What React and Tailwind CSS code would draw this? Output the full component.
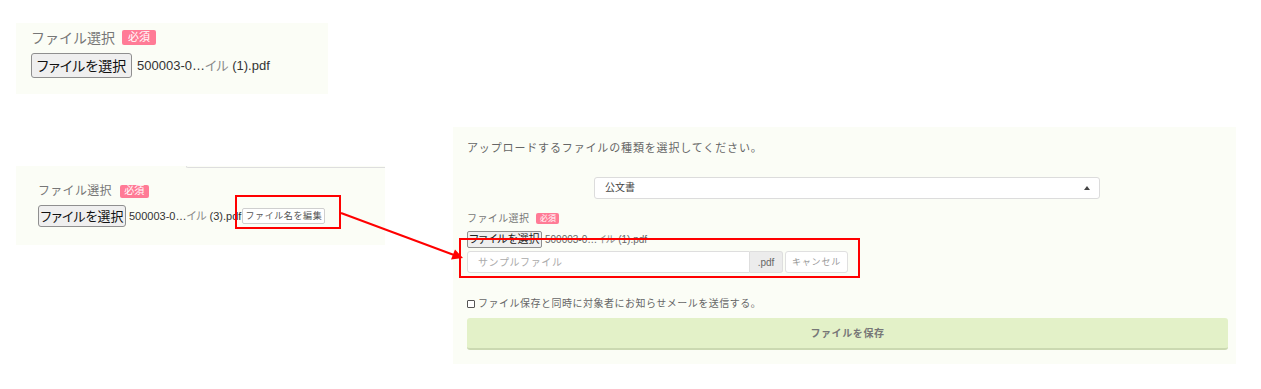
const FONT = "font-['Liberation_Sans','Noto_Sans_CJK_JP',sans-serif]";

function Badge({ className = "" }) {
  return (
    <span className={`inline-flex items-center justify-center rounded-[2px] bg-[#ff7b96] text-white leading-none ${className}`}>
      必須
    </span>
  );
}

function FileName({ num, className = "" }) {
  return (
    <span className={`whitespace-nowrap text-[#333] ${className}`}>
      500003-0…<span className="text-[#8a8a8a] [font-feature-settings:'palt']">イル</span> ({num}).pdf
    </span>
  );
}

function Panel1() {
  return (
    <section className="mt-[23px] h-[71px] w-[312px] bg-[#fbfdf6] pl-[15px] pt-[6px]">
      <div className="flex h-[17px] items-center gap-[7px]">
        <span className="text-[14px] leading-none text-[#777]">ファイル選択</span>
        <Badge className="h-[15px] w-[34px] text-[11px]" />
      </div>
      <div className="mt-[7px] flex items-center gap-[5px]">
        <button className="h-[25px] w-[101px] rounded-[3px] border border-[#8f8f8f] bg-[#efefef] text-[14px] leading-none text-[#111] [font-feature-settings:'palt']">
          ファイルを選択
        </button>
        <FileName num="1" className="text-[13px]" />
      </div>
    </section>
  );
}

function Panel2() {
  return (
    <section className="mt-[72px] h-[79px] w-[369px] bg-[#fbfdf6]">
      <div className="ml-[170px] h-[2px] rounded-bl-[4px] border-b border-l border-[#dedede]" />
      <div className="pl-[22px] pt-[16px]">
        <div className="flex h-[14px] items-center gap-[8px]">
          <span className="text-[12px] leading-none tracking-[0.3px] text-[#777]">ファイル選択</span>
          <Badge className="h-[13px] w-[29px] text-[10px]" />
        </div>
        <div className="mt-[7px] flex items-center">
          <button className="h-[22px] w-[88px] rounded-[3px] border border-[#8f8f8f] bg-[#efefef] text-[13px] leading-none text-[#111] [font-feature-settings:'palt']">
            ファイルを選択
          </button>
          <FileName num="3" className="ml-[3px] text-[11px]" />
          <button className="ml-[1px] h-[16px] w-[83px] rounded-[2px] border border-[#cfcfcf] bg-white text-[9px] leading-none tracking-[0.6px] text-[#555]">
            ファイル名を編集
          </button>
        </div>
      </div>
    </section>
  );
}

function Panel3() {
  return (
    <section className="ml-[68px] mt-[127px] h-[237px] w-[783px] bg-[#fbfdf6] pl-[14px] pt-[14px]">
      <p className="h-[14px] text-[11px] leading-[14px] tracking-[0.85px] text-[#666]">
        アップロードするファイルの種類を選択してください。
      </p>
      <div className="ml-[127px] mt-[22px] flex h-[22px] w-[506px] items-center justify-between rounded-[3px] border border-[#dcdcdc] bg-white pl-[10px] pr-[9px]">
        <span className="text-[10px] leading-none text-[#444]">公文書</span>
        <span className="h-0 w-0 border-x-[3px] border-b-[4px] border-x-transparent border-b-[#444]" />
      </div>
      <div className="mt-[13px] flex h-[13px] items-center gap-[7px]">
        <span className="text-[10px] leading-none tracking-[0.4px] text-[#777]">ファイル選択</span>
        <Badge className="h-[11px] w-[23px] text-[8px]" />
      </div>
      <div className="mt-[6px] flex items-center gap-[3px]">
        <button className="h-[17px] w-[75px] rounded-[2px] border border-[#8f8f8f] bg-[#efefef] text-[11px] leading-none text-[#222] [font-feature-settings:'palt']">
          ファイルを選択
        </button>
        <FileName num="1" className="text-[10px] text-[#666]" />
      </div>
      <div className="mt-[3px] flex h-[22px] w-[381px] items-stretch">
        <div className="flex flex-1 items-center rounded-l-[3px] border border-[#dedede] bg-white pl-[10px] text-[10px] tracking-[0.6px] text-[#aaa]">
          サンプルファイル
        </div>
        <div className="flex w-[33px] items-center justify-center rounded-r-[3px] border border-l-0 border-[#dedede] bg-[#ececec] text-[10px] text-[#666]">
          .pdf
        </div>
        <button className="ml-[2px] w-[63px] rounded-[3px] border border-[#e0e0e0] bg-white text-[9px] leading-none tracking-[0.8px] text-[#999]">
          キャンセル
        </button>
      </div>
      <label className="mt-[25px] flex h-[12px] items-center gap-[3px] text-[10px] leading-none tracking-[0.5px] text-[#666]">
        <span className="h-[8px] w-[8px] rounded-[1px] border border-[#555] bg-white" />
        ファイル保存と同時に対象者にお知らせメールを送信する。
      </label>
      <button className="mt-[8px] flex h-[32px] w-[761px] items-center justify-center rounded-[3px] border-b-2 border-[#cbd9b1] bg-[#e3f1c8] text-[10px] font-bold tracking-[0.6px] text-[#777]">
        ファイルを保存
      </button>
    </section>
  );
}

export default function App() {
  return (
    <div className={`relative flex h-[389px] w-[1261px] items-start bg-white ${FONT}`}>
      <div className="ml-[16px] flex w-[369px] flex-col">
        <Panel1 />
        <Panel2 />
      </div>
      <Panel3 />
      <svg className="pointer-events-none absolute inset-0" width="1261" height="389" viewBox="0 0 1261 389">
        <rect x="236" y="196" width="104" height="32" fill="none" stroke="#ff0000" strokeWidth="2" />
        <rect x="460" y="239" width="399" height="38" fill="none" stroke="#ff0000" strokeWidth="2" />
        <line x1="341" y1="213" x2="454" y2="255" stroke="#ff0000" strokeWidth="2" />
        <polygon points="463,258 451,259.5 455,249.5" fill="#ff0000" />
      </svg>
    </div>
  );
}
